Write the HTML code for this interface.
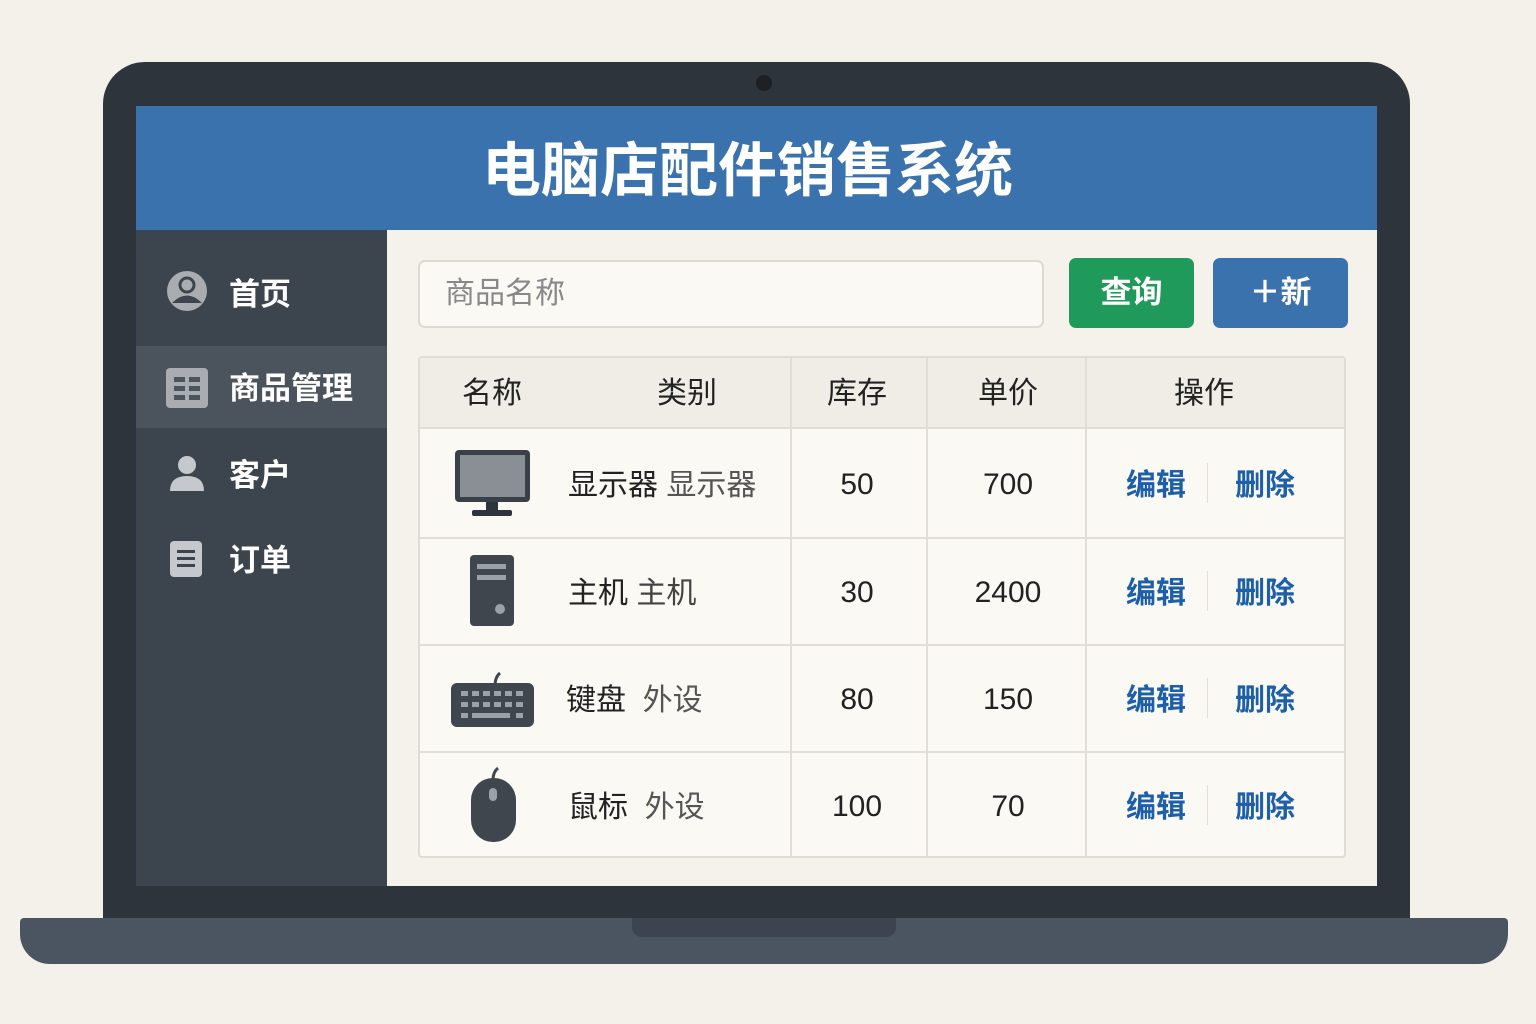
<!DOCTYPE html>
<html><head><meta charset="utf-8"><style>
*{margin:0;padding:0;box-sizing:border-box}
body{width:1536px;height:1024px;background:#f3f1ea;position:relative;overflow:hidden;font-family:"Liberation Sans","Noto Sans CJK SC",sans-serif}
.abs{position:absolute}
.body{left:103px;top:62px;width:1307px;height:870px;background:#2e343b;border-radius:42px 42px 0 0}
.base{left:20px;top:918px;width:1488px;height:46px;background:#4a5561;border-radius:4px 4px 30px 30px}
.notch{left:632px;top:918px;width:264px;height:19px;background:#3c454f;border-radius:0 0 10px 10px}
.cam{left:756px;top:75px;width:16px;height:16px;border-radius:50%;background:#1d2126}
.screen{left:136px;top:106px;width:1241px;height:780px;background:#f4f2eb;overflow:hidden}
.hdr{left:0;top:0;width:1241px;height:124px;background:#3a72ae;color:#fff;font-size:59px;font-weight:bold;text-align:center;line-height:130px;padding-right:18px}
.side{left:0;top:124px;width:251px;height:656px;background:#3c454e}
.act{left:0;top:240px;width:251px;height:82px;background:#4b545d}
.nav{color:#fff;font-size:31px;font-weight:bold;left:93px}
.inp{left:282px;top:154px;width:626px;height:68px;border:2px solid #dcdad3;border-radius:7px;background:#faf9f4;color:#888;font-size:30px;line-height:64px;padding-left:25px}
.btn{top:152px;height:70px;border-radius:7px;color:#fff;font-size:31px;font-weight:bold;text-align:center;line-height:70px}
.tbl{left:282px;top:250px;width:928px;height:502px;border:2px solid #dedcd5;border-radius:4px;background:#faf9f4}
.th{left:0;top:0;width:924px;height:71px;background:#efede6}
.h{top:0;line-height:72px;font-size:30px;color:#222;transform:translateX(-50%)}
.hl{left:0;width:924px;height:2px;background:#e0ded7}
.vl{top:0;width:2px;height:498px;background:#e0ded7}
.c{font-size:30px;color:#222;transform:translateX(-50%)}
.lk{font-size:30px;color:#1d5fa8;transform:translateX(-50%);font-weight:bold}
.sep{width:1px;height:40px;background:#e2e0d9}
</style></head><body>
<div class="abs body"></div>
<div class="abs cam"></div>
<div class="abs base"></div>
<div class="abs notch"></div>
<div class="abs screen">
 <div class="abs hdr">电脑店配件销售系统</div>
 <div class="abs side"></div>
 <div class="abs act"></div>
 <svg class="abs" style="left:30px;top:164px" width="42" height="42" viewBox="0 0 42 42"><circle cx="21" cy="21" r="20" fill="#a9adb2"/><circle cx="21" cy="15" r="7" fill="none" stroke="#3c454e" stroke-width="3"/><path d="M6 33 Q21 18 36 33" fill="#3c454e"/></svg>
 <div class="abs nav" style="top:163px">首页</div>
 <svg class="abs" style="left:30px;top:262px" width="42" height="40"><rect width="42" height="40" rx="4" fill="#a9adb2"/><g fill="#4b545d"><rect x="8" y="9" width="11" height="5"/><rect x="23" y="9" width="11" height="5"/><rect x="8" y="18" width="11" height="5"/><rect x="23" y="18" width="11" height="5"/><rect x="8" y="27" width="11" height="5"/><rect x="23" y="27" width="11" height="5"/></g></svg>
 <div class="abs nav" style="top:257px">商品管理</div>
 <svg class="abs" style="left:33px;top:349px" width="36" height="36"><circle cx="18" cy="10" r="9" fill="#c5c8cc"/><path d="M1 36 Q1 21 18 21 Q35 21 35 36Z" fill="#c5c8cc"/></svg>
 <div class="abs nav" style="top:344px">客户</div>
 <svg class="abs" style="left:34px;top:435px" width="32" height="36"><rect width="32" height="36" rx="4" fill="#c5c8cc"/><g fill="#3c454e"><rect x="7" y="9" width="18" height="3"/><rect x="7" y="16" width="18" height="3"/><rect x="7" y="23" width="18" height="3"/></g></svg>
 <div class="abs nav" style="top:429px">订单</div>
 <div class="abs inp">商品名称</div>
 <div class="abs btn" style="left:933px;width:125px;background:#1f9a5a">查询</div>
 <div class="abs btn" style="left:1077px;width:135px;background:#3a72ae">＋新</div>
 <div class="abs tbl">
  <div class="abs th"></div>
  <div class="abs hl" style="top:69px"></div>
  <div class="abs hl" style="top:179px"></div>
  <div class="abs hl" style="top:286px"></div>
  <div class="abs hl" style="top:393px"></div>
  <div class="abs vl" style="left:370px"></div>
  <div class="abs vl" style="left:506px"></div>
  <div class="abs vl" style="left:665px"></div>
  <div class="abs h" style="left:72px">名称</div>
  <div class="abs h" style="left:267px">类别</div>
  <div class="abs h" style="left:437px">库存</div>
  <div class="abs h" style="left:588px">单价</div>
  <div class="abs h" style="left:784px">操作</div>
  <svg class="abs" style="left:34px;top:91px" width="78" height="70"><rect x="1" y="1" width="75" height="52" rx="4" fill="#3a4048"/><rect x="6" y="6" width="65" height="42" fill="#8a8f96"/><rect x="32" y="53" width="12" height="9" fill="#2e343b"/><rect x="18" y="61" width="40" height="6" rx="2" fill="#2e343b"/></svg>
  <svg class="abs" style="left:50px;top:197px" width="46" height="74"><rect width="44" height="71" rx="4" fill="#3f464e"/><rect x="7" y="9" width="29" height="5" fill="#9ca1a8"/><rect x="7" y="20" width="29" height="5" fill="#9ca1a8"/><circle cx="30" cy="54" r="5" fill="#9ca1a8"/></svg>
  <svg class="abs" style="left:30px;top:311px" width="86" height="60"><path d="M45 17 Q45 8 50 4" stroke="#3f464e" stroke-width="3" fill="none"/><rect x="1" y="14" width="83" height="44" rx="6" fill="#3f464e"/><g fill="#9ca1a8"><rect x="11" y="22" width="7" height="5"/><rect x="22" y="22" width="7" height="5"/><rect x="33" y="22" width="7" height="5"/><rect x="44" y="22" width="7" height="5"/><rect x="55" y="22" width="7" height="5"/><rect x="66" y="22" width="7" height="5"/><rect x="11" y="33" width="7" height="5"/><rect x="22" y="33" width="7" height="5"/><rect x="33" y="33" width="7" height="5"/><rect x="44" y="33" width="7" height="5"/><rect x="55" y="33" width="7" height="5"/><rect x="66" y="33" width="7" height="5"/><rect x="11" y="44" width="7" height="5"/><rect x="22" y="44" width="38" height="5"/><rect x="66" y="44" width="7" height="5"/></g></svg>
  <svg class="abs" style="left:50px;top:408px" width="48" height="80"><path d="M23 14 Q23 6 28 2" stroke="#3f464e" stroke-width="3" fill="none"/><rect x="1" y="12" width="45" height="64" rx="22" fill="#3f464e"/><rect x="19" y="22" width="8" height="13" rx="4" fill="#9ca1a8"/></svg>
  <div class="abs" style="left:148px;top:102px;font-size:30px;color:#222">显示器 <span style="color:#555">显示器</span></div>
  <div class="abs" style="left:148px;top:210px;font-size:30px;color:#222">主机 <span style="color:#444">主机</span></div>
  <div class="abs" style="left:146px;top:317px;font-size:30px;color:#222">键盘 &nbsp;<span style="color:#555">外设</span></div>
  <div class="abs" style="left:148px;top:424px;font-size:30px;color:#222">鼠标 &nbsp;<span style="color:#555">外设</span></div>
  <div class="abs c" style="left:437px;top:110px">50</div><div class="abs c" style="left:588px;top:110px">700</div>
  <div class="abs c" style="left:437px;top:218px">30</div><div class="abs c" style="left:588px;top:218px">2400</div>
  <div class="abs c" style="left:437px;top:325px">80</div><div class="abs c" style="left:588px;top:325px">150</div>
  <div class="abs c" style="left:437px;top:432px">100</div><div class="abs c" style="left:588px;top:432px">70</div>
  <div class="abs lk" style="left:736px;top:102px">编辑</div><div class="abs lk" style="left:845px;top:102px">删除</div><div class="abs sep" style="left:787px;top:105px"></div>
  <div class="abs lk" style="left:736px;top:210px">编辑</div><div class="abs lk" style="left:845px;top:210px">删除</div><div class="abs sep" style="left:787px;top:213px"></div>
  <div class="abs lk" style="left:736px;top:317px">编辑</div><div class="abs lk" style="left:845px;top:317px">删除</div><div class="abs sep" style="left:787px;top:320px"></div>
  <div class="abs lk" style="left:736px;top:424px">编辑</div><div class="abs lk" style="left:845px;top:424px">删除</div><div class="abs sep" style="left:787px;top:427px"></div>
 </div>
</div>
</body></html>
